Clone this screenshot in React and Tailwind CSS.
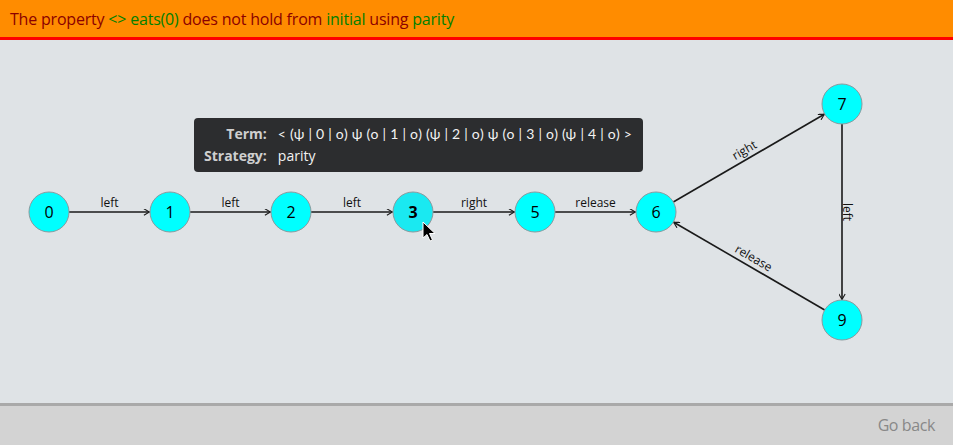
import React from "react";

const nodes = [
  { id: "0", x: 49, y: 212 },
  { id: "1", x: 170, y: 212 },
  { id: "2", x: 291, y: 212 },
  { id: "3", x: 413, y: 212, hover: true },
  { id: "5", x: 535, y: 212 },
  { id: "6", x: 656, y: 212 },
  { id: "7", x: 842, y: 104 },
  { id: "9", x: 842, y: 320 },
];

const byId = Object.fromEntries(nodes.map((n) => [n.id, n]));

const edges = [
  { from: "0", to: "1", label: "left" },
  { from: "1", to: "2", label: "left" },
  { from: "2", to: "3", label: "left" },
  { from: "3", to: "5", label: "right" },
  { from: "5", to: "6", label: "release" },
  { from: "6", to: "7", label: "right" },
  { from: "7", to: "9", label: "left" },
  { from: "9", to: "6", label: "release", flip: true },
];

const R = 20;

function Edge({ from, to, label, flip }) {
  const a = byId[from];
  const b = byId[to];
  const dx = b.x - a.x;
  const dy = b.y - a.y;
  const len = Math.hypot(dx, dy);
  const ux = dx / len;
  const uy = dy / len;
  const x1 = a.x + ux * R;
  const y1 = a.y + uy * R;
  const x2 = b.x - ux * (R + 0.5);
  const y2 = b.y - uy * (R + 0.5);
  const mx = (a.x + b.x) / 2;
  const my = (a.y + b.y) / 2;
  let angle = (Math.atan2(dy, dx) * 180) / Math.PI;
  if (flip) angle = angle - 180;
  return (
    <g>
      <line x1={x1} y1={y1} x2={x2} y2={y2} stroke="#1a1a1a" strokeWidth="1.6" markerEnd="url(#arrow)" />
      <text
        transform={`translate(${mx} ${my}) rotate(${angle})`}
        y={from === "7" ? -1 : -5}
        textAnchor="middle"
        fontSize="12"
        fill="#111"
      >
        {label}
      </text>
    </g>
  );
}

export default function App() {
  return (
    <div
      className="flex flex-col h-[445px] w-[953px] overflow-hidden bg-[#dfe3e6]"
      style={{ fontFamily: '"Open Sans", "Noto Sans", sans-serif' }}
    >
      <div className="h-[40px] shrink-0 bg-[#ff8c00] border-b-[3px] border-[#ff0000] flex items-center px-[10px] text-[16px] tracking-[-0.2px] text-[#8b0000]">
        <span>
          The property <span className="text-[#008000]">&lt;&gt; eats(0)</span> does not hold from{" "}
          <span className="text-[#008000]">initial</span> using <span className="text-[#008000]">parity</span>
        </span>
      </div>

      <div className="relative flex-1">
        <svg className="absolute inset-0" width="953" height="363" viewBox="0 40 953 363">
          <defs>
            <marker id="arrow" viewBox="0 0 10 10" refX="9" refY="5" markerWidth="7" markerHeight="7" markerUnits="userSpaceOnUse" orient="auto">
              <path d="M1 0.5 L9 5 L1 9.5" fill="none" stroke="#1a1a1a" strokeWidth="1.6" />
            </marker>
          </defs>
          {edges.map((e, i) => (
            <Edge key={i} {...e} />
          ))}
          {nodes.map((n) => (
            <g key={n.id}>
              <circle cx={n.x} cy={n.y} r={R} fill={n.hover ? "#1ae9f1" : "#00ffff"} stroke="#8c9a9e" strokeWidth="1" />
              <text x={n.x} y={n.y + 6} textAnchor="middle" fontSize="16" fontWeight={n.hover ? "700" : "400"} fill="#000">
                {n.id}
              </text>
            </g>
          ))}
          <path
            d="M423 222 L423 238 L427 234.5 L430 241 L432.5 240 L429.5 233.5 L435 233.5 Z"
            fill="#000"
            stroke="#fff"
            strokeWidth="1"
          />
        </svg>

        <div className="absolute left-[194px] top-[78px] h-[54px] w-[449px] rounded-[4px] bg-[#2c2d2f] pl-[10px] pr-[10px] flex items-center text-[14px]">
          <div className="grid grid-cols-[auto_1fr] gap-x-[11px] gap-y-[2px] leading-[20px]">
            <span className="text-right font-bold text-[#cfcfcf]">Term:</span>
            <span className="text-[#f2f2f2] whitespace-nowrap tracking-[0.25px]" style={{ fontFamily: 'Lato, "Open Sans", sans-serif' }}>
              &lt; (ψ | 0 | o) ψ (o | 1 | o) (ψ | 2 | o) ψ (o | 3 | o) (ψ | 4 | o) &gt;
            </span>
            <span className="text-right font-bold text-[#cfcfcf]">Strategy:</span>
            <span className="text-[#f2f2f2]">parity</span>
          </div>
        </div>
      </div>

      <div className="h-[42px] shrink-0 bg-[#d3d3d3] border-t-[3px] border-[#a9a9a9] flex items-center justify-end pr-[18px] pb-[2px]">
        <span className="text-[16px] tracking-[-0.4px] text-[#888888]">Go back</span>
      </div>
    </div>
  );
}
